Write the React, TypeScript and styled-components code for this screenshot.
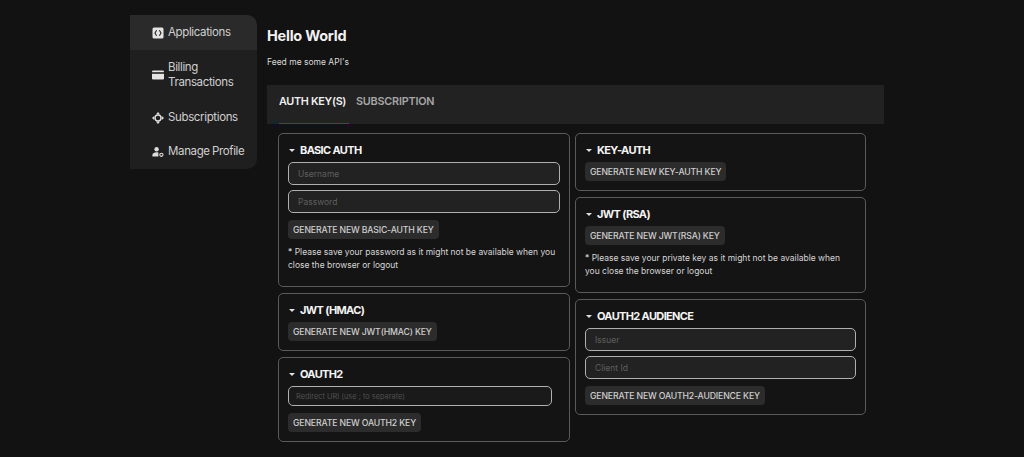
import React from 'react';
import styled, { createGlobalStyle } from 'styled-components';

const GlobalStyle = createGlobalStyle`
  html, body {
    margin: 0;
    padding: 0;
    background: #121212;
    color: #e8e8e8;
    font-family: Inter, "Open Sans", sans-serif;
  }
  * { box-sizing: border-box; }
`;

const Page = styled.div`
  display: flex;
  align-items: flex-start;
  width: 1024px;
  height: 457px;
  padding: 15px 0 0 130px;
  overflow: hidden;
`;

const Sidebar = styled.nav`
  width: 127px;
  height: 154px;
  flex: none;
  background: #1f1f1f;
  border-radius: 0 10px 10px 0;
  overflow: hidden;
`;

const NavItem = styled.div<{ $active?: boolean; $height: number }>`
  display: flex;
  align-items: center;
  gap: 4px;
  height: ${(p) => p.$height}px;
  padding-left: 22px;
  background: ${(p) => (p.$active ? '#2a2a2a' : 'transparent')};
  color: #cfcfcf;
  font-size: 11.5px;
  line-height: 15.5px;
  letter-spacing: -0.36px;
  word-spacing: -0.6px;

  svg {
    flex: none;
    width: 12px;
    height: 12px;
  }
`;

const Main = styled.main`
  width: 617px;
  margin-left: 10px;
`;

const Heading = styled.h1`
  margin: 12px 0 0;
  font-size: 14.5px;
  line-height: 18px;
  font-weight: 700;
  letter-spacing: -0.25px;
  color: #f2f2f2;
`;

const Sub = styled.p`
  margin: 11px 0 0;
  font-size: 8.5px;
  line-height: 12px;
  color: #d8d8d8;
`;

const TabBar = styled.div`
  display: flex;
  height: 39px;
  margin-top: 17px;
  padding-left: 12px;
  background: #222222;
`;

const Tab = styled.div<{ $active?: boolean }>`
  height: 39px;
  padding-top: 10px;
  margin-right: 7px;
  min-width: ${(p) => (p.$active ? '70px' : 'auto')};
  font-size: 10.8px;
  line-height: 14px;
  font-weight: 600;
  letter-spacing: ${(p) => (p.$active ? '-0.3px' : '-0.2px')};
  color: ${(p) => (p.$active ? '#f0f0f0' : '#a6a6a6')};
  border-bottom: 1px solid ${(p) => (p.$active ? '#b01c1c' : 'transparent')};
`;

const Columns = styled.div`
  display: flex;
  align-items: flex-start;
  gap: 5px;
  margin: 9px 0 0 11px;
`;

const Column = styled.div<{ $width: number }>`
  display: flex;
  flex-direction: column;
  gap: 6px;
  width: ${(p) => p.$width}px;
`;

const Card = styled.section<{ $height: number }>`
  height: ${(p) => p.$height}px;
  padding: 8px 9px 0;
  background: #141414;
  border: 1px solid #5a5a5a;
  border-radius: 5px;
`;

const CardTitle = styled.h2`
  display: flex;
  align-items: center;
  gap: 5px;
  margin: 0 0 4px;
  height: 16px;
  font-size: 11px;
  font-weight: 700;
  letter-spacing: -0.65px;
  color: #f4f4f4;

  &::before {
    content: '';
    width: 0;
    height: 0;
    margin-left: 1px;
    border-left: 3px solid transparent;
    border-right: 3px solid transparent;
    border-top: 3.5px solid #e0e0e0;
  }
`;

const Field = styled.input<{ $small?: boolean }>`
  display: block;
  width: ${(p) => (p.$small ? '264px' : '100%')};
  height: ${(p) => (p.$small ? '20px' : '23px')};
  margin-bottom: 5px;
  padding: 0 ${(p) => (p.$small ? '7px' : '9px')};
  background: ${(p) => (p.$small ? '#1a1a1a' : '#222222')};
  border: 1px solid #b0b0b0;
  border-radius: 5px;
  color: #e0e0e0;
  font-family: inherit;
  font-size: ${(p) => (p.$small ? '7.4px' : '8.5px')};
  outline: none;

  &::placeholder {
    color: ${(p) => (p.$small ? '#505050' : '#5f5f5f')};
    opacity: 1;
  }
`;

const GenerateButton = styled.button`
  display: block;
  height: 19px;
  margin: 2px 0 0;
  padding: 0 5px;
  background: #2c2c2c;
  border: 0;
  border-radius: 4px;
  color: #cfcfcf;
  font-family: inherit;
  font-size: 8.7px;
  font-weight: 500;
  letter-spacing: -0.15px;
  white-space: nowrap;

  ${Field} + & {
    margin-top: 7px;
  }
`;

const Note = styled.p`
  margin: 7px 0 0;
  font-size: 8.5px;
  line-height: 13px;
  color: #d6d6d6;
`;

const AppIcon = () => (
  <svg viewBox="0 0 12 12">
    <rect x="0.5" y="0.5" width="11" height="11" rx="1.5" fill="#e4e4e4" />
    <path d="M4.6 3.2 3 6l1.6 2.8M7.4 3.2 9 6 7.4 8.8" fill="none" stroke="#222" strokeWidth="1.1" />
  </svg>
);

const CardIcon = () => (
  <svg viewBox="0 0 12 12">
    <rect x="0" y="1.5" width="12" height="9" rx="1.3" fill="#e4e4e4" />
    <rect x="0" y="3.2" width="12" height="1.6" fill="#222" />
  </svg>
);

const SubIcon = () => (
  <svg viewBox="0 0 12 12">
    <circle cx="6" cy="6" r="3" fill="none" stroke="#e0e0e0" strokeWidth="1.4" />
    <path d="M6 0 8 2.2H4zM6 12 4 9.8h4zM0 6l2.2-2v4zM12 6 9.8 8V4z" fill="#e0e0e0" />
  </svg>
);

const ProfileIcon = () => (
  <svg viewBox="0 0 12 12">
    <circle cx="4.6" cy="3.2" r="2.2" fill="#dcdcdc" />
    <path d="M0.4 10.6V9c0-1.8 2-2.8 4.2-2.8.7 0 1.3.1 1.8.3v4.1z" fill="#dcdcdc" />
    <circle cx="9.4" cy="8.8" r="1.6" fill="none" stroke="#dcdcdc" strokeWidth="1.1" />
  </svg>
);

export default function App() {
  return (
    <>
      <GlobalStyle />
      <Page>
        <Sidebar>
          <NavItem $active $height={35}>
            <AppIcon />
            Applications
          </NavItem>
          <NavItem $height={50}>
            <CardIcon />
            <span>
              Billing
              <br />
              Transactions
            </span>
          </NavItem>
          <NavItem $height={35}>
            <SubIcon />
            Subscriptions
          </NavItem>
          <NavItem $height={34}>
            <ProfileIcon />
            Manage Profile
          </NavItem>
        </Sidebar>
        <Main>
          <Heading>Hello World</Heading>
          <Sub>Feed me some API's</Sub>
          <TabBar>
            <Tab $active>AUTH KEY(S)</Tab>
            <Tab>SUBSCRIPTION</Tab>
          </TabBar>
          <Columns>
            <Column $width={292}>
              <Card $height={154}>
                <CardTitle>BASIC AUTH</CardTitle>
                <Field placeholder="Username" />
                <Field placeholder="Password" />
                <GenerateButton>GENERATE NEW BASIC-AUTH KEY</GenerateButton>
                <Note>
                  * Please save your password as it might not be available when you close the browser or logout
                </Note>
              </Card>
              <Card $height={58}>
                <CardTitle>JWT (HMAC)</CardTitle>
                <GenerateButton>GENERATE NEW JWT(HMAC) KEY</GenerateButton>
              </Card>
              <Card $height={85}>
                <CardTitle>OAUTH2</CardTitle>
                <Field $small placeholder="Redirect URI (use ; to separate)" />
                <GenerateButton>GENERATE NEW OAUTH2 KEY</GenerateButton>
              </Card>
            </Column>
            <Column $width={291}>
              <Card $height={58}>
                <CardTitle>KEY-AUTH</CardTitle>
                <GenerateButton>GENERATE NEW KEY-AUTH KEY</GenerateButton>
              </Card>
              <Card $height={96}>
                <CardTitle>JWT (RSA)</CardTitle>
                <GenerateButton>GENERATE NEW JWT(RSA) KEY</GenerateButton>
                <Note>* Please save your private key as it might not be available when you close the browser or logout</Note>
              </Card>
              <Card $height={116}>
                <CardTitle>OAUTH2 AUDIENCE</CardTitle>
                <Field placeholder="Issuer" />
                <Field placeholder="Client Id" />
                <GenerateButton>GENERATE NEW OAUTH2-AUDIENCE KEY</GenerateButton>
              </Card>
            </Column>
          </Columns>
        </Main>
      </Page>
    </>
  );
}
